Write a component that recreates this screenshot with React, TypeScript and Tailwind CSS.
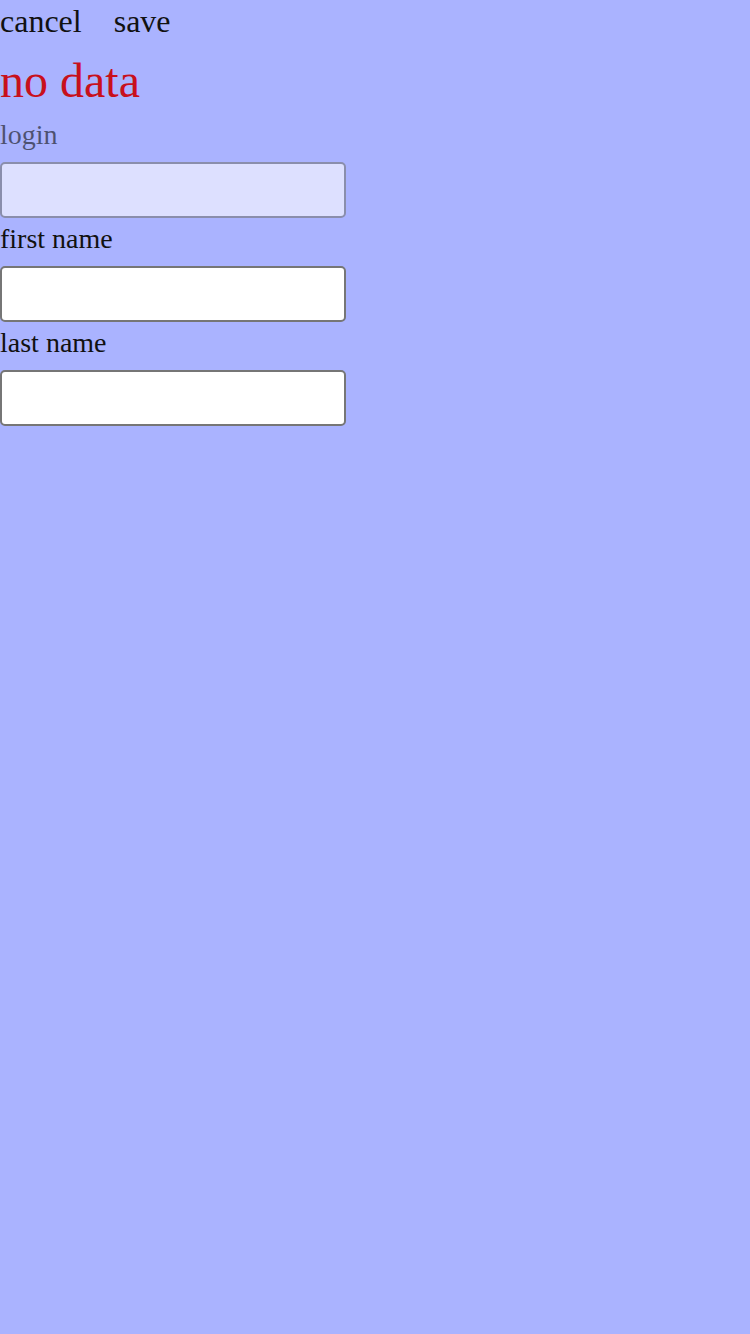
import React, { useState } from "react";

const serif = { fontFamily: '"Liberation Serif", "Times New Roman", serif' };

function Field({
  label,
  value,
  onChange,
  disabled,
}: {
  label: string;
  value: string;
  onChange: (v: string) => void;
  disabled?: boolean;
}) {
  return (
    <div className={disabled ? "opacity-60" : ""}>
      <label className="block text-[28px] leading-[31px] text-[#111]">{label}</label>
      <input
        value={value}
        disabled={disabled}
        onChange={(e) => onChange(e.target.value)}
        className="mt-[12px] mb-[5px] block h-[56px] w-[346px] rounded-[5px] border-2 border-[#767676] bg-white px-2 text-[28px] text-black outline-none"
      />
    </div>
  );
}

export default function App() {
  const [login, setLogin] = useState("");
  const [firstName, setFirstName] = useState("");
  const [lastName, setLastName] = useState("");

  return (
    <div className="min-h-[1334px] w-full bg-[#aab3ff]" style={serif}>
      {/* acciones */}
      <div className="flex gap-[32px] pt-[4px]">
        <button className="text-[32px] leading-[35px] text-[#111]">cancel</button>
        <button className="text-[32px] leading-[35px] text-[#111]">save</button>
      </div>

      <div className="mt-[15px] text-[48px] leading-[53px] text-[#c8101c]">no data</div>

      <div className="mt-[12px]">
        <Field label="login" value={login} onChange={setLogin} disabled />
        <Field label="first name" value={firstName} onChange={setFirstName} />
        <Field label="last name" value={lastName} onChange={setLastName} />
      </div>
    </div>
  );
}
